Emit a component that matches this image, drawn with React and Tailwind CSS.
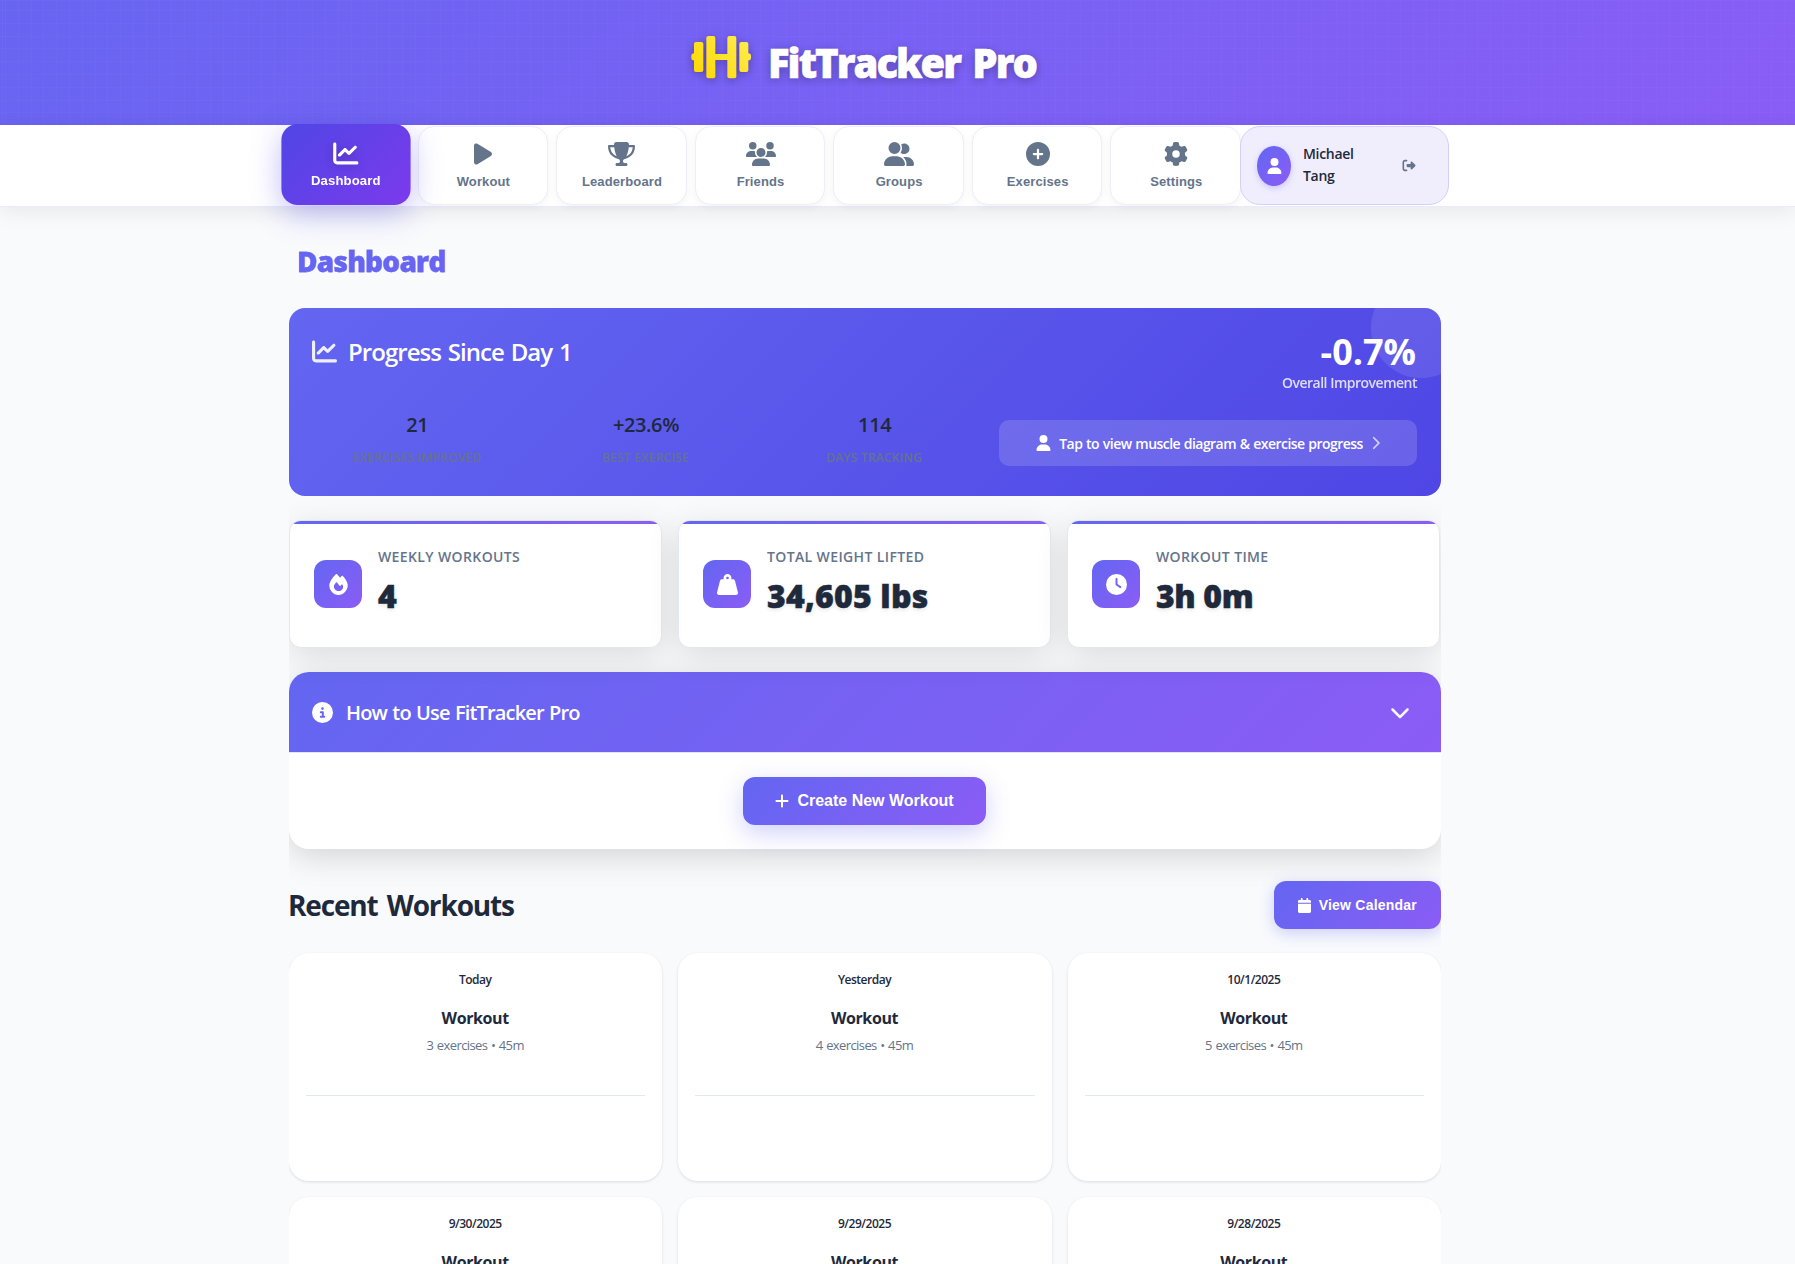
import React from "react";
import {
  FaChartLine, FaPlay, FaTrophy, FaUsers, FaUserGroup, FaCirclePlus, FaGear,
  FaUser, FaRightFromBracket, FaFire, FaWeightHanging, FaClock, FaCircleInfo,
  FaChevronDown, FaChevronRight, FaPlus, FaCalendar,
} from "react-icons/fa6";

const NAV = [
  { label: "Workout", Icon: FaPlay, size: "w-[18px]" },
  { label: "Leaderboard", Icon: FaTrophy, size: "w-[27px]" },
  { label: "Friends", Icon: FaUsers, size: "w-[30px]" },
  { label: "Groups", Icon: FaUserGroup, size: "w-[30px]" },
  { label: "Exercises", Icon: FaCirclePlus, size: "w-6" },
  { label: "Settings", Icon: FaGear, size: "w-6" },
];

const PROGRESS = [
  { value: "21", label: "Exercises Improved" },
  { value: "+23.6%", label: "Best Exercise" },
  { value: "114", label: "Days Tracking" },
];

const STATS = [
  { label: "Weekly Workouts", value: "4", Icon: FaFire, spacing: "tracking-normal" },
  { label: "Total Weight Lifted", value: "34,605 lbs", Icon: FaWeightHanging, spacing: "tracking-[0.2px]" },
  { label: "Workout Time", value: "3h 0m", Icon: FaClock, spacing: "tracking-[-0.4px]" },
];

const WORKOUTS = [
  { date: "Today", meta: "3 exercises • 45m" },
  { date: "Yesterday", meta: "4 exercises • 45m" },
  { date: "10/1/2025", meta: "5 exercises • 45m" },
  { date: "9/30/2025", meta: "4 exercises • 45m" },
  { date: "9/29/2025", meta: "4 exercises • 45m" },
  { date: "9/28/2025", meta: "4 exercises • 45m" },
];

function Dumbbell({ className }) {
  return (
    <svg viewBox="0 0 180 144" className={className} aria-hidden="true">
      <defs>
        <linearGradient id="gold" gradientUnits="userSpaceOnUse" x1="20" y1="144" x2="160" y2="0">
          <stop offset="0" stopColor="#ffd700" />
          <stop offset="1" stopColor="#ffed4e" />
        </linearGradient>
      </defs>
      <g fill="url(#gold)">
        <rect x="9" y="27" width="28" height="90" rx="6" />
        <rect x="1" y="61" width="16" height="21" rx="8" />
        <rect x="46" y="9" width="27" height="127" rx="6" />
        <rect x="68" y="63" width="44" height="18" />
        <rect x="109" y="9" width="27" height="127" rx="6" />
        <rect x="145" y="27" width="27" height="90" rx="6" />
        <rect x="164" y="61" width="16" height="21" rx="8" />
      </g>
    </svg>
  );
}

function Header() {
  return (
    <header className="h-[125px] bg-[linear-gradient(135deg,#6865f2,#895df6)]">
      <div className="flex h-full items-center justify-center bg-[repeating-linear-gradient(90deg,rgba(255,255,255,0.018)_0_1px,transparent_1px_12.8px),repeating-linear-gradient(180deg,rgba(255,255,255,0.018)_0_1px,transparent_1px_12.8px)] bg-[position:5px_10px] pr-[68px]">
        <Dumbbell className="-mt-[11px] h-12 w-[60px] drop-shadow-[0_2px_4px_rgba(0,0,0,0.3)]" />
        <span className="ml-[17px] text-[40px] leading-[60px] font-extrabold tracking-[-1.98px] text-white [-webkit-text-stroke:0.6px_white] [text-shadow:0_2px_10px_rgba(0,0,0,0.3)] [word-spacing:4px]">
          FitTracker Pro
        </span>
      </div>
    </header>
  );
}

function Nav() {
  return (
    <nav className="relative h-[82px] border-b border-[#ebe9fd] bg-white pr-[65px] shadow-[0_4px_20px_rgba(0,0,0,0.08)]">
      <div className="mx-auto flex w-[1168px] pt-px">
        <div className="-mr-px flex h-[79px] w-[960px] gap-2 pl-px font-['Liberation_Sans',sans-serif] text-[13px] font-bold tracking-[0.12px] text-[#64748b]">
          <button className="-mt-0.5 flex h-[81px] flex-1 scale-x-[1.01] flex-col items-center rounded-[16px] bg-[linear-gradient(135deg,#4f46e5,#7c3aed)] pt-[17px] text-white shadow-[0_8px_30px_rgba(79,70,229,0.35)]">
            <FaChartLine className="h-[25px] w-[25.6px] drop-shadow-[0_2px_4px_rgba(0,0,0,0.2)]" />
            <span className="mt-[7px] leading-4">Dashboard</span>
          </button>
          {NAV.map(({ label, Icon, size }) => (
            <button key={label} className="flex flex-1 flex-col items-center rounded-[16px] border border-[#eeeef9] bg-white pt-[15px] pl-px shadow-[0_2px_8px_rgba(0,0,0,0.05)]">
              <Icon className={"h-6 " + size} />
              <span className="mt-[8px] leading-4">{label}</span>
            </button>
          ))}
        </div>
        <div className="flex h-[79px] w-[209px] items-center rounded-[20px] border border-[#d3d0fa] bg-[#f0eefd] pl-4">
          <span className="flex h-10 w-[34px] items-center justify-center rounded-[50%] bg-[linear-gradient(135deg,#6366f1,#8b5cf6)] text-white shadow-[0_2px_6px_rgba(99,102,241,0.3)]">
            <FaUser className="h-4 w-[15px]" />
          </span>
          <span className="ml-3 w-[60px] pb-px text-[14px] leading-[22px] font-semibold tracking-[-0.3px] text-[#1e293b]">Michael Tang</span>
          <FaRightFromBracket className="ml-[39px] h-[13px] w-[14px] text-[#64748b]" />
        </div>
      </div>
    </nav>
  );
}

function ProgressCard() {
  return (
    <section className="relative h-[188px] overflow-hidden rounded-[16px] bg-[linear-gradient(135deg,#6366f1,#4f46e5)] px-6 text-white">
      <span className="absolute -top-[30px] -right-[30px] h-[100px] w-[100px] rounded-full bg-white/10" />
      <div className="flex h-[86px] justify-between">
        <div className="-ml-px flex pt-[26px]">
          <FaChartLine className="mt-[5px] h-[25px] w-[25px] opacity-90" />
          <h2 className="ml-[11px] text-[24px] leading-9 font-semibold tracking-[-0.95px] [word-spacing:1.5px]">Progress Since Day 1</h2>
        </div>
        <div className="pt-[24px] text-right">
          <div className="pr-px text-[36px] leading-10 font-bold">-0.7%</div>
          <div className="text-[14px] leading-[22px] font-semibold tracking-[-0.5px] opacity-80">Overall Improvement</div>
        </div>
      </div>
      <div className="mt-[15px] flex gap-5">
        <div className="grid w-[666px] grid-cols-3 gap-5 text-center">
          {PROGRESS.map((p) => (
            <div key={p.label}>
              <div className="text-[20px] leading-8 font-semibold tracking-[-0.4px] text-[#1e293b]">{p.value}</div>
              <div className="mt-[7px] pr-px text-[12px] leading-5 font-semibold tracking-[0.22px] text-[#64748b] uppercase">{p.label}</div>
            </div>
          ))}
        </div>
        <button className="mt-[11px] flex h-[46px] flex-1 items-center justify-center rounded-[10px] bg-white/15 text-[14px] font-semibold">
          <FaUser className="h-4 w-[15px]" />
          <span className="ml-2 tracking-[-0.55px] [word-spacing:0.7px]">Tap to view muscle diagram &amp; exercise progress</span>
          <FaChevronRight className="ml-2 h-[14px] w-[9px] opacity-70" />
        </button>
      </div>
    </section>
  );
}

function StatCard({ label, value, Icon, spacing }) {
  return (
    <div className="relative flex h-[128px] items-center rounded-[12px] border border-[#e2e8f0] bg-white px-6 shadow-[0_8px_32px_rgba(0,0,0,0.12)]">
      <div className="absolute inset-0 overflow-hidden rounded-[11px]">
        <div className="h-[3px] bg-[linear-gradient(90deg,#6366f1,#8b5cf6)]" />
      </div>
      <span className="flex h-12 w-12 items-center justify-center rounded-[12px] bg-[linear-gradient(135deg,#6366f1,#8b5cf6)] text-white">
        <Icon className="h-[21px] w-[21px]" />
      </span>
      <div className="ml-4 pb-[4px]">
        <div className="text-[14px] leading-[22px] font-semibold tracking-[0.38px] text-[#64748b] uppercase">{label}</div>
        <div className={"mt-[5px] text-[32px] leading-[46px] font-extrabold text-[#1e293b] [-webkit-text-stroke:0.5px_#1e293b] [text-shadow:0_2px_4px_rgba(0,0,0,0.1)] " + spacing}>{value}</div>
      </div>
    </div>
  );
}

function HowTo() {
  return (
    <section className="mt-6 rounded-[20px] bg-white shadow-[0_8px_32px_rgba(0,0,0,0.15)]">
      <div className="flex h-[81px] items-center rounded-t-[20px] border-b border-[#e2e8f0] bg-[linear-gradient(135deg,#6366f1,#8b5cf6)] pr-[31px] pl-[23px] text-white">
        <FaCircleInfo className="h-[21px] w-[21px]" />
        <h3 className="ml-[13px] flex-1 pt-[2px] text-[20px] font-semibold tracking-[-0.85px] [word-spacing:1px]">How to Use FitTracker Pro</h3>
        <FaChevronDown className="h-5 w-5" />
      </div>
      <div className="flex h-[96px] items-center justify-center pr-px">
        <button className="flex h-12 items-center gap-2 rounded-[12px] bg-[linear-gradient(135deg,#6366f1,#8b5cf6)] px-8 font-['Liberation_Sans',sans-serif] text-[16px] font-bold text-white shadow-[0_8px_25px_rgba(99,102,241,0.3)]">
          <FaPlus className="h-4 w-[14px]" />
          Create New Workout
        </button>
      </div>
    </section>
  );
}

export default function App() {
  return (
    <div className="h-[1264px] overflow-hidden bg-[#f8fafc] font-['Open_Sans',sans-serif]">
      <Header />
      <Nav />
      <main className="pr-[65px]">
        <div className="mx-auto w-[1152px] overflow-x-clip">
          <h1 className="mt-[32px] bg-[linear-gradient(135deg,#6366f1,#8b5cf6)] bg-clip-text pl-2 text-[28px] leading-[45px] font-extrabold tracking-[-0.78px] text-transparent [-webkit-text-stroke:0.3px_#6565f2]">Dashboard</h1>
          <div className="h-6" />
          <ProgressCard />
          <div className="mt-6 grid grid-cols-3 gap-4 pr-px">
            {STATS.map((s) => <StatCard key={s.label} {...s} />)}
          </div>
          <HowTo />
          <div className="mt-8 flex h-12 items-center justify-between">
            <h2 className="-ml-px pb-px text-[28px] font-bold tracking-[-1.15px] text-[#1e293b] [word-spacing:3px]">Recent Workouts</h2>
            <button className="flex h-12 items-center rounded-[12px] bg-[linear-gradient(135deg,#6366f1,#8b5cf6)] px-6 font-['Liberation_Sans',sans-serif] text-[14px] font-bold tracking-[0.22px] text-white shadow-[0_4px_15px_rgba(99,102,241,0.3)]">
              <FaCalendar className="mr-2 h-[15px] w-[13px]" />
              View Calendar
            </button>
          </div>
          <div className="mt-6 grid grid-cols-3 gap-4">
            {WORKOUTS.map((w) => (
              <article key={w.date} className="flex h-[228px] flex-col items-stretch rounded-[20px] bg-white px-[17px] pt-[17px] text-center shadow-[0_1px_3px_rgba(0,0,0,0.12)]">
                <div className="pr-px text-[12px] leading-5 font-semibold tracking-[-0.48px] text-[#1e293b]">{w.date}</div>
                <div className="mt-[16px] pr-px text-[16px] leading-6 font-bold tracking-[-0.4px] text-[#1e293b]">Workout</div>
                <div className="mt-[5px] pr-px text-[13px] leading-5 tracking-[-0.6px] text-[#64748b] [word-spacing:0.8px]">{w.meta}</div>
                <div className="mt-[40px] h-px bg-[#e2e8f0]" />
              </article>
            ))}
          </div>
        </div>
      </main>
    </div>
  );
}
